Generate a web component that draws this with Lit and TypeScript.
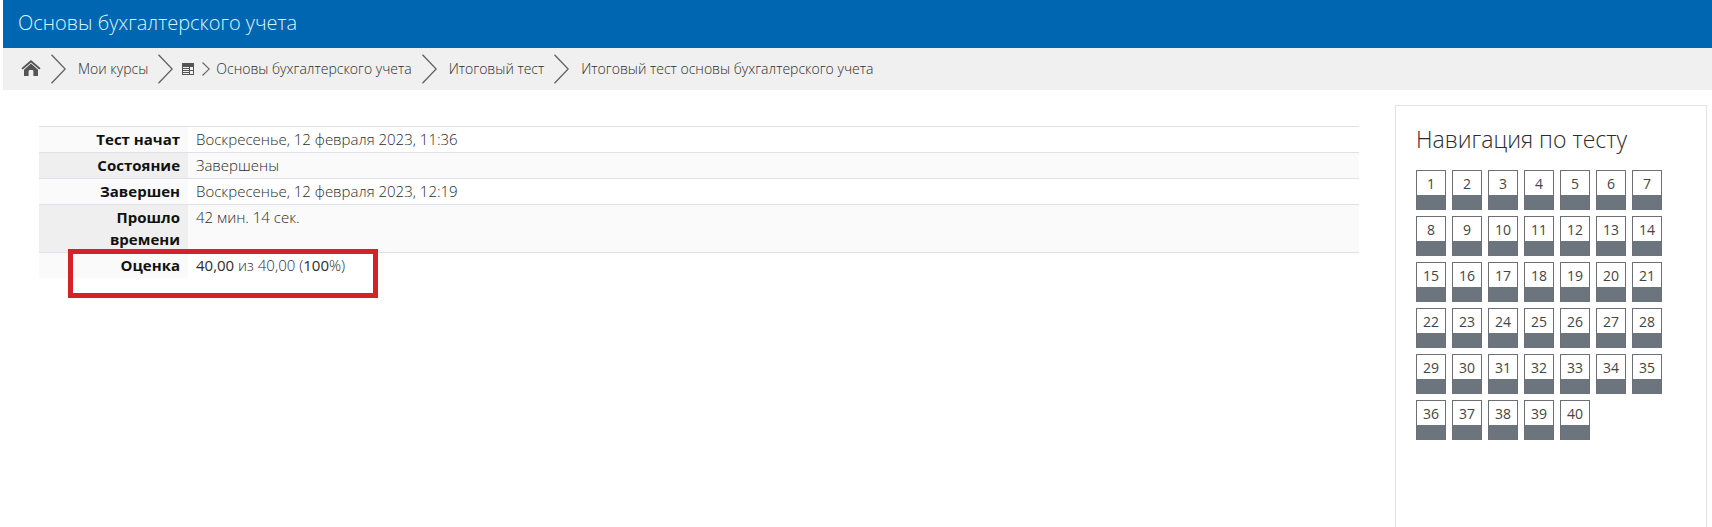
import { LitElement, html, css, svg } from "lit";
import { customElement, property } from "lit/decorators.js";

@customElement("crumb-arrow")
class CrumbArrow extends LitElement {
  @property({ type: Boolean, reflect: true }) small = false;

  static styles = css`
    :host { display: block; flex: none; width: 15px; height: 30px; }
    :host([small]) { width: 8px; height: 14px; }
    svg { display: block; width: 100%; height: 100%; }
  `;

  render() {
    return this.small
      ? html`<svg viewBox="0 0 8 14" aria-hidden="true"><path d="M.5.5 7.3 7 .5 13.5" fill="none" stroke="#666" stroke-width="1.1" /></svg>`
      : html`<svg viewBox="0 0 15 30" aria-hidden="true"><path d="M.5.8 14.2 15 .5 29.2" fill="none" stroke="#606060" stroke-width="1.3" /></svg>`;
  }
}

const homeIcon = svg`<path d="M10 1.2 1.2 9.2" /><path d="M.4 9.3 10 .9 19.6 9.3 18.3 10.6 10 3.4 1.7 10.6z" /><path d="M10 4.6 17 10.7V17H12.4V12.4Q12.4 11 11 11H9Q7.6 11 7.6 12.4V17H3V10.7z" />`;

const courseIcon = svg`<path fill-rule="evenodd" d="M0 0h12v12H0zM1 4h6v1H1zM1 6h6v1H1zM1 8h6v1H1zM1 10h6v1H1zM8 4h3v3H8zM8 8h3v3H8z" />`;

@customElement("app-root")
class AppRoot extends LitElement {
  private questions = Array.from({ length: 40 }, (_, i) => i + 1);

  static styles = css`
    :host {
      display: flex;
      flex-direction: column;
      min-height: 100vh;
      box-sizing: border-box;
      padding-left: 3px;
      background: #fff;
      color: #2c2c2c;
      font: 300 14px/22px "Open Sans", "Noto Sans", sans-serif;
    }
    a { color: inherit; text-decoration: none; }
    .top { background: #0066b1; padding: 8px 15px 10px; }
    .top h1 { margin: 0; font-size: 20px; font-weight: 300; line-height: 30px; color: #d8f6ff; }
    .crumbs {
      display: flex;
      align-items: center;
      min-height: 42px;
      padding: 0 18px;
      background: #f0f0f0;
    }
    .crumbs ol { display: flex; align-items: center; margin: 0; padding: 0; list-style: none; }
    .crumbs li { display: flex; align-items: center; }
    .crumbs a { display: block; }
    .crumbs crumb-arrow { margin: 0 12px 0 10px; }
    .crumbs .tight crumb-arrow { margin: 0 9px 0 10px; }
    .crumbs crumb-arrow[small] { margin: 0 6px 0 8px; }
    .home svg { display: block; width: 20px; height: 20px; fill: #555; }
    .course svg { display: block; width: 12px; height: 12px; fill: #555; shape-rendering: crispEdges; }
    .body { display: flex; flex: 1; align-items: stretch; }
    main { position: relative; flex: 1; padding: 36px 36px 0; }
    table { width: 100%; border-collapse: collapse; }
    th, td {
      border-top: 1px solid #dee2e6;
      padding: 1px 8px 2px;
      text-align: left;
      vertical-align: top;
      font-size: 15px;
      line-height: 22px;
    }
    th { width: 133px; color: #111; font-weight: 700; text-align: right; background: #fafafa; }
    td b { font-weight: 400; }
    tr:nth-child(even) th { background: #efefef; }
    tr:nth-child(even) td { background: #fafafa; }
    .mark {
      position: absolute;
      left: 65px;
      top: 159px;
      width: 300px;
      height: 39px;
      border: 5px solid #d2232a;
      pointer-events: none;
    }
    aside {
      box-sizing: border-box;
      width: 312px;
      margin: 15px 5px 0 0;
      padding: 18px 20px;
      border: 1px solid #e3e3e3;
      border-bottom: 0;
    }
    aside h2 { margin: 0 0 16px; font-size: 23px; font-weight: 300; line-height: 30px; }
    .grid { display: flex; flex-wrap: wrap; gap: 6px; }
    .q {
      box-sizing: border-box;
      width: 30px;
      height: 40px;
      border: 1px solid #6c7075;
      border-bottom: 0;
      background: linear-gradient(to top, #6c757d 15px, transparent 15px);
      color: #444;
      font-weight: 400;
      line-height: 26px;
      text-align: center;
    }
  `;

  render() {
    return html`
      <header class="top"><h1>Основы бухгалтерского учета</h1></header>
      <nav class="crumbs" aria-label="Навигация">
        <ol>
          <li><a class="home" href="#" aria-label="В начало"><svg viewBox="0 0 20 20">${homeIcon}</svg></a></li>
          <li><crumb-arrow></crumb-arrow><a href="#">Мои курсы</a></li>
          <li class="tight"><crumb-arrow></crumb-arrow><span class="course"><svg viewBox="0 0 12 12">${courseIcon}</svg></span></li>
          <li><crumb-arrow small></crumb-arrow><a href="#">Основы бухгалтерского учета</a></li>
          <li><crumb-arrow></crumb-arrow><a href="#">Итоговый тест</a></li>
          <li><crumb-arrow></crumb-arrow><a href="#">Итоговый тест основы бухгалтерского учета</a></li>
        </ol>
      </nav>
      <div class="body">
        <main>
          <table>
            <tbody>
              <tr><th scope="row">Тест начат</th><td>Воскресенье, 12 февраля 2023, 11:36</td></tr>
              <tr><th scope="row">Состояние</th><td>Завершены</td></tr>
              <tr><th scope="row">Завершен</th><td>Воскресенье, 12 февраля 2023, 12:19</td></tr>
              <tr><th scope="row">Прошло времени</th><td>42 мин. 14 сек.</td></tr>
              <tr><th scope="row">Оценка</th><td><b>40,00</b> из 40,00 (<b>100</b>%)</td></tr>
            </tbody>
          </table>
          <div class="mark"></div>
        </main>
        <aside>
          <h2>Навигация по тесту</h2>
          <div class="grid">${this.questions.map((n) => html`<a class="q" href="#">${n}</a>`)}</div>
        </aside>
      </div>
    `;
  }
}
